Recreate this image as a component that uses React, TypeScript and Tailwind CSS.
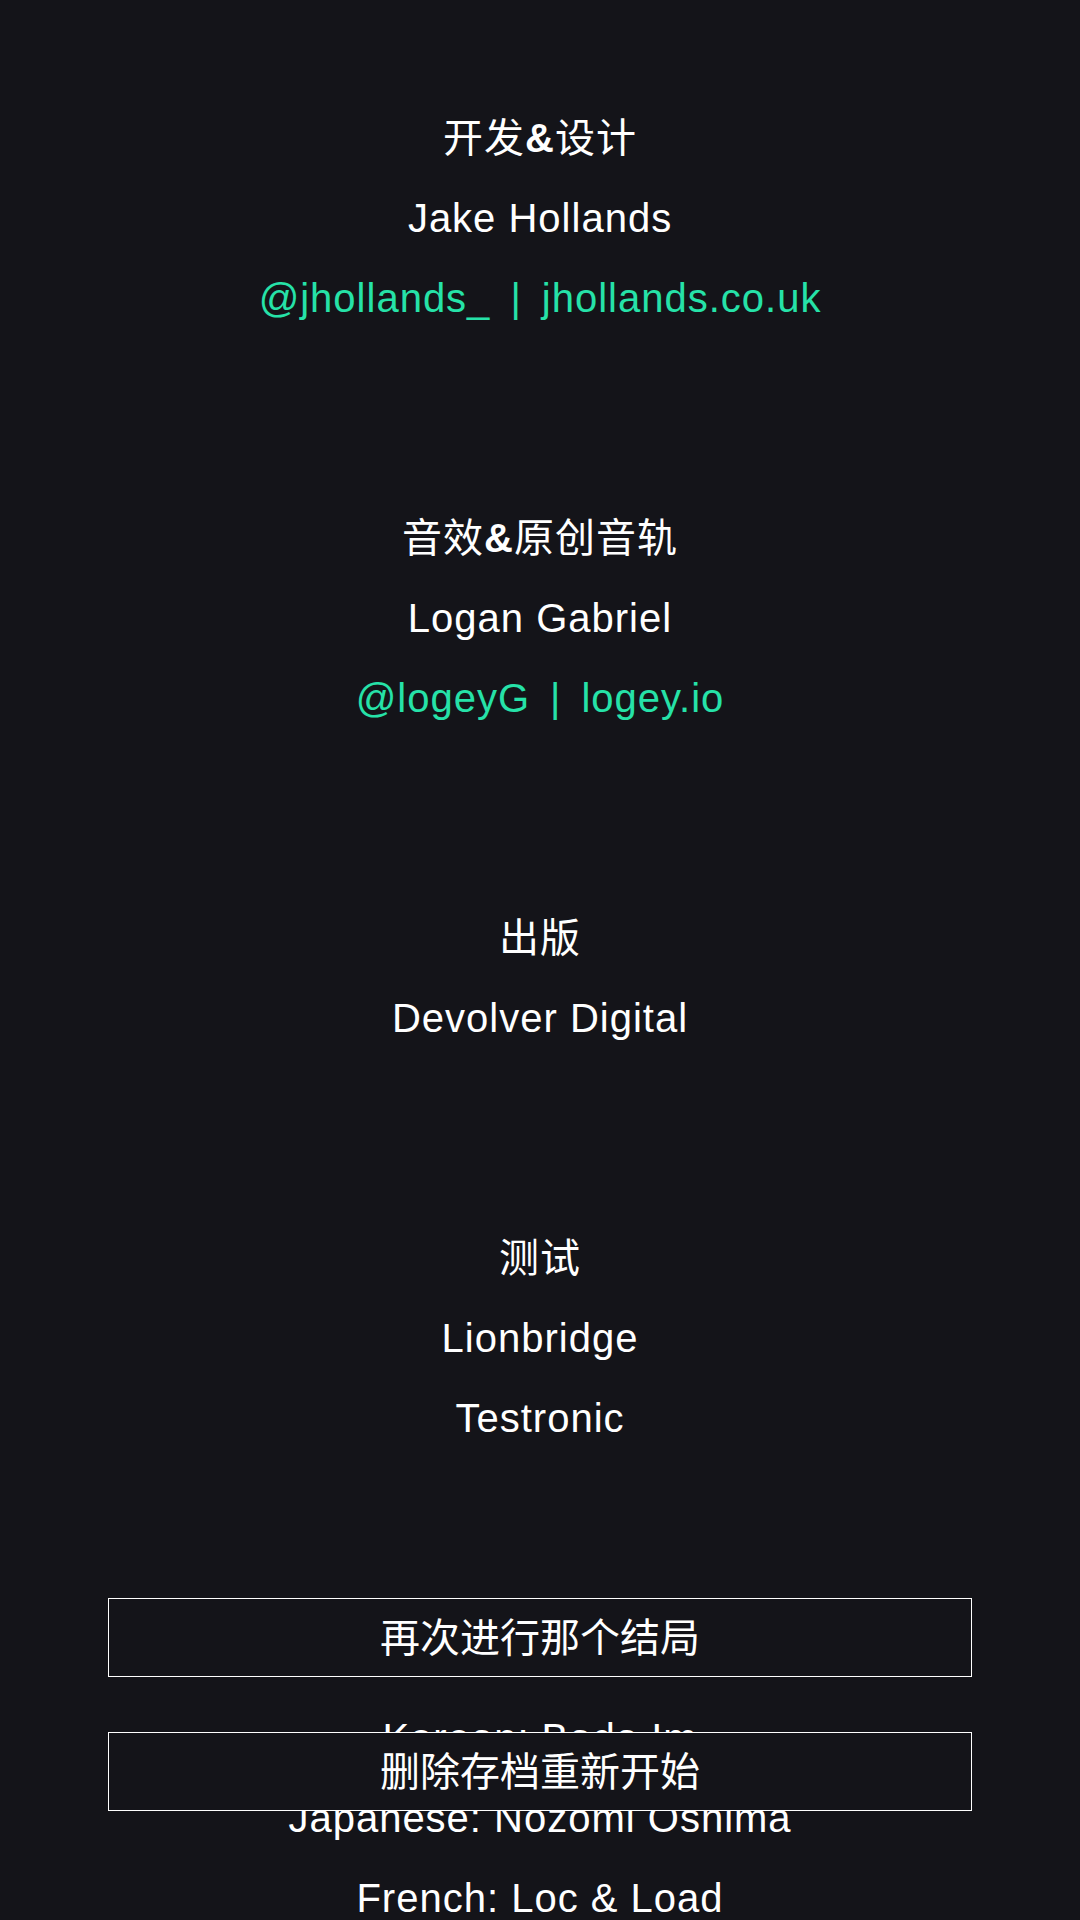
const FONT = "font-['Liberation_Sans','Noto_Sans_CJK_SC',sans-serif]";

type Line = { text?: React.ReactNode; link?: [string, string] };

function Amp({ children }: { children: string }) {
  const parts = children.split("&");
  return (
    <>
      {parts[0]}
      <span className="font-bold">&amp;</span>
      {parts[1]}
    </>
  );
}

// credits roll; the two menu buttons sit on top of it
const lines: Line[] = [
  { text: <Amp>开发&设计</Amp> },
  { text: "Jake Hollands" },
  { link: ["@jhollands_", "jhollands.co.uk"] },
  {},
  {},
  { text: <Amp>音效&原创音轨</Amp> },
  { text: "Logan Gabriel" },
  { link: ["@logeyG", "logey.io"] },
  {},
  {},
  { text: "出版" },
  { text: "Devolver Digital" },
  {},
  {},
  { text: "测试" },
  { text: "Lionbridge" },
  { text: "Testronic" },
  {},
  {},
  { text: "本地化" },
  { text: "Korean: Bada Im" },
  { text: "Japanese: Nozomi Oshima" },
  { text: "French: Loc & Load" },
  { text: "German: Loc & Load" },
];

export default function App() {
  return (
    <div className={`relative h-[1920px] w-full overflow-hidden bg-[#141419] text-white ${FONT}`}>
      <div className="flex flex-col pt-[98px] text-center text-[40px] leading-[80px] tracking-[1px]">
        {lines.map((l, i) => (
          <div key={i} className="h-[80px] whitespace-nowrap">
            {l.link ? (
              <span className="text-[#26e2a8]">
                {l.link[0]}
                <span className="mx-[20px]">|</span>
                {l.link[1]}
              </span>
            ) : (
              l.text
            )}
          </div>
        ))}
      </div>

      <div className="absolute left-[108px] top-[1598px] flex w-[864px] flex-col gap-[55px]">
        <MenuButton label="再次进行那个结局" />
        <MenuButton label="删除存档重新开始" />
      </div>
    </div>
  );
}

function MenuButton({ label }: { label: string }) {
  return (
    <button className="flex h-[79px] w-full items-center justify-center border border-white bg-[#141419] text-[40px] leading-none text-white">
      {label}
    </button>
  );
}
